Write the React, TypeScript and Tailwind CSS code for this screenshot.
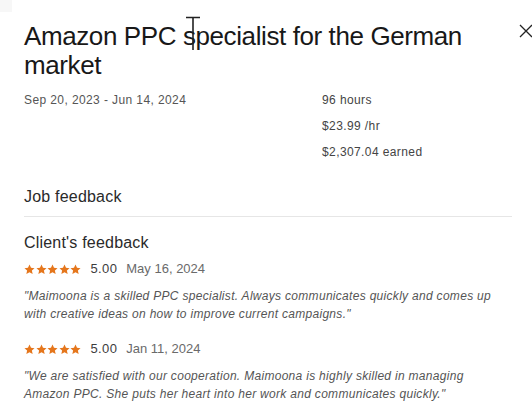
import React from "react";

const Star = () => (
  <svg width="11" height="11" viewBox="0 0 24 24" className="block">
    <path d="M12 1.2l3.3 7.1 7.7.8-5.8 5.2 1.7 7.6L12 18l-6.9 3.9 1.7-7.6L1 9.1l7.7-.8z" fill="#e5761c" />
  </svg>
);

const Stars = () => (
  <div className="flex gap-[0.6px]">
    <Star />
    <Star />
    <Star />
    <Star />
    <Star />
  </div>
);

const Review = ({ date, text }: { date: string; text: string }) => (
  <div>
    <div className="flex items-center h-[20px]">
      <Stars />
      <span className="ml-[9px] text-[13px] text-[#3d3d3d] tracking-[0.4px]">5.00</span>
      <span className="ml-[9px] text-[13px] text-[#6a6a6a] tracking-[0px]">{date}</span>
    </div>
    <p className="mt-[8px] text-[12px] leading-[18px] italic text-[#555] tracking-[0.3px]">{text}</p>
  </div>
);

export default function App() {
  return (
    <div
      className="relative w-[532px] h-[410px] bg-white overflow-hidden"
      style={{ fontFamily: '"Liberation Sans", Arial, sans-serif' }}
    >
      <div className="absolute left-0 top-0 w-[12px] h-[12px] bg-[#f7f7f7]" />
      <svg className="absolute left-[519px] top-[24px]" width="14" height="14" viewBox="0 0 14 14">
        <path d="M1 1L13 13M13 1L1 13" stroke="#222" strokeWidth="1.3" />
      </svg>
      <svg className="absolute left-[186px] top-[16px] z-10" width="15" height="34" viewBox="0 0 15 34">
        <path d="M0 1.5h14M7 1.5V34" stroke="#222" strokeWidth="1.6" />
      </svg>
      <div className="pl-[24px] pt-[22px] w-[512px]">
        <h1 className="text-[26px] leading-[29px] text-[#181818] font-normal tracking-[-0.4px] pr-[30px]">
          Amazon PPC specialist for the German market
        </h1>
        <div className="flex mt-[11px]">
          <div className="w-[298px] text-[12px] text-[#555] tracking-[0.4px] leading-[18px]">
            Sep 20, 2023 - Jun 14, 2024
          </div>
          <div className="flex flex-col gap-[8px] text-[12px] text-[#444] tracking-[0.4px] leading-[18px]">
            <span>96 hours</span>
            <span>$23.99 /hr</span>
            <span>$2,307.04 earned</span>
          </div>
        </div>
        <div className="mt-[24px] text-[16px] leading-[24px] text-[#2a2a2a] tracking-[0.2px] pb-[7px] border-b border-[#e6e6e6]">
          Job feedback
        </div>
        <div className="mt-[14px] text-[16px] leading-[24px] text-[#2a2a2a] tracking-[0.2px]">
          Client's feedback
        </div>
        <div className="mt-[4px] flex flex-col gap-[16px]">
          <Review
            date="May 16, 2024"
            text={'"Maimoona is a skilled PPC specialist. Always communicates quickly and comes up with creative ideas on how to improve current campaigns."'}
          />
          <Review
            date="Jan 11, 2024"
            text={'"We are satisfied with our cooperation. Maimoona is highly skilled in managing Amazon PPC. She puts her heart into her work and communicates quickly."'}
          />
        </div>
      </div>
    </div>
  );
}
